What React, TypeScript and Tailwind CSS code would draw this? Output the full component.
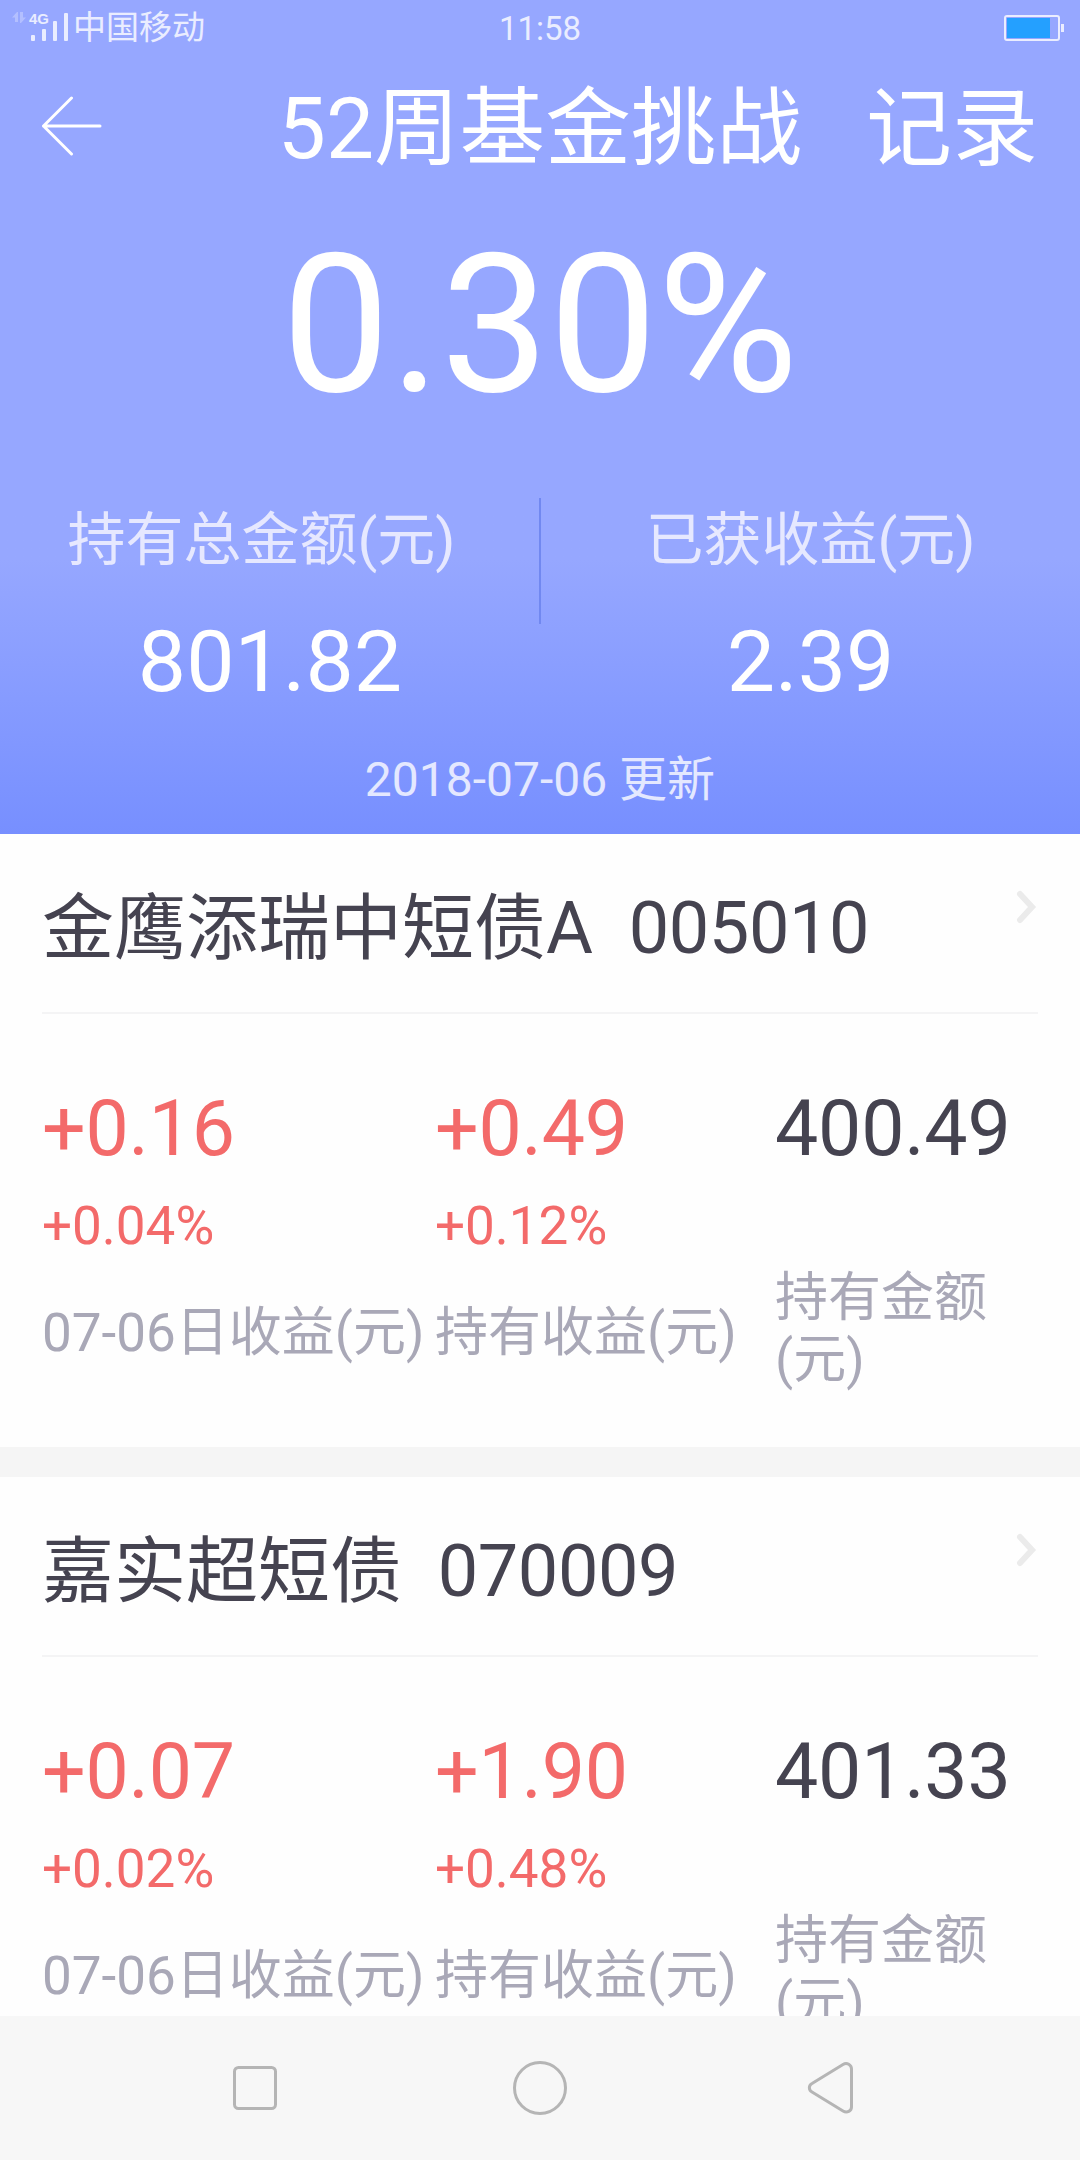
const stats = [
  { label: "持有总金额(元)", value: "801.82", labelClass: "pr-[17px]" },
  { label: "已获收益(元)", value: "2.39", labelClass: "" },
];

const funds = [
  {
    name: "金鹰添瑞中短债A",
    code: "005010",
    day: { amount: "+0.16", percent: "+0.04%" },
    total: { amount: "+0.49", percent: "+0.12%" },
    holding: "400.49",
  },
  {
    name: "嘉实超短债",
    code: "070009",
    day: { amount: "+0.07", percent: "+0.02%" },
    total: { amount: "+1.90", percent: "+0.48%" },
    holding: "401.33",
  },
];

type Fund = (typeof funds)[number];

function StatusBar() {
  return (
    <div className="grid h-14 grid-cols-3 items-center text-[#eaedff]">
      <div className="flex items-center pl-3">
        <svg className="h-[42px] w-[58px] shrink-0" viewBox="12 7 58 42" fill="currentColor">
          <path d="M12 17.5 17 12h1v10h-3v-4.5zM20 12h3v5.5h3L21 23h-1z" opacity="0.35" />
          <text x="29" y="24" fontFamily="Liberation Sans, sans-serif" fontSize="15" fontWeight="700">4G</text>
          <rect x="31" y="35" width="4" height="6" rx="1" />
          <rect x="42" y="29" width="4" height="12" rx="1" />
          <rect x="53" y="21" width="4" height="20" rx="1" />
          <rect x="64" y="13" width="4" height="28" rx="1" />
        </svg>
        <span className="ml-[3px] text-[33px] leading-[56px]">中国移动</span>
      </div>
      <div className="pt-0.5 text-center text-[33px] leading-[54px]">11:58</div>
      <div className="flex justify-end pr-4">
        <svg className="h-[26px] w-[60px]" viewBox="0 0 60 26">
          <rect x="1" y="1" width="54" height="24" rx="2" fill="none" stroke="#eaedff" strokeWidth="2" />
          <rect x="3" y="3" width="43" height="20" fill="#24a0ff" />
          <rect x="57" y="9" width="3" height="8" fill="#eaedff" />
        </svg>
      </div>
    </div>
  );
}

function Profit({ amount, percent }: { amount: string; percent: string }) {
  return (
    <div className="text-[#f36a6a]">
      <div className="text-[77px] leading-[103px] tracking-[-0.2px]">{amount}</div>
      <div className="mt-1 text-[53px] leading-[82px]">{percent}</div>
    </div>
  );
}

function FundCard({ fund }: { fund: Fund }) {
  return (
    <section className="h-[613px] shrink-0 bg-[#fefefe] px-[42px] text-[#454350]">
      <div className="flex h-[180px] justify-between border-b-2 border-[#f4f4f5]">
        <h2 className="whitespace-pre pt-[11px] text-[72px] leading-[167px]">
          {fund.name}{"  "}<span className="tracking-[-0.4px]">{fund.code}</span>
        </h2>
        <svg className="mt-[56px] mr-px h-[34px] w-[22px]" viewBox="0 0 22 34" fill="none" stroke="#ebebeb" strokeWidth="6" strokeLinecap="round">
          <path d="M5 4 17 17 5 30" />
        </svg>
      </div>

      <div className="grid grid-cols-[393px_340px_263px] pt-16">
        <Profit {...fund.day} />
        <Profit {...fund.total} />
        <div className="text-[77px] leading-[103px] tracking-[-0.2px]">{fund.holding}</div>
      </div>

      <div className="grid h-[132px] grid-cols-[393px_340px_263px] items-center text-[53px] leading-[62px] text-[#a9a8b7]">
        <div className="whitespace-nowrap">07-06日收益(元)</div>
        <div className="whitespace-nowrap">持有收益(元)</div>
        <div className="pb-2">持有金额(元)</div>
      </div>
    </section>
  );
}

export default function App() {
  return (
    <div className="flex h-[2160px] w-[1080px] flex-col overflow-hidden bg-[#f5f5f5] font-[Roboto,'Noto_Sans_CJK_SC',sans-serif]">
      <header className="h-[834px] shrink-0 bg-linear-to-b from-[#96a7ff] from-67% to-[#778fff] text-white">
        <StatusBar />

        <div className="flex h-[147px] items-center justify-between pr-[42px] pl-10 text-[86px] leading-[147px]">
          <svg className="mb-[7px] h-[60px] w-[64px]" viewBox="0 0 64 60" fill="none" stroke="currentColor" strokeWidth="3" strokeLinecap="round" strokeLinejoin="round">
            <path d="M31.5 2 3.5 30l28 28M3.5 30H60" />
          </svg>
          <div className="flex gap-16">
            <h1 className="text-[85.6px]">52周基金挑战</h1>
            <span>记录</span>
          </div>
        </div>

        <div className="pt-px text-center text-[192.5px] leading-[242px]">0.30%</div>

        <div className="flex pt-[52px]">
          {stats.map(({ label, value, labelClass }, i) => (
            <div key={label} className="flex flex-1">
              {i > 0 && <div className="-ml-px h-[126px] w-[2px] bg-[#7188f0]" />}
              <div className="flex-1 text-center">
                <div className={`text-[58px] leading-[84px] text-[#e6e8ff] ${labelClass}`}>{label}</div>
                <div className="text-[86px] leading-[159px]">{value}</div>
              </div>
            </div>
          ))}
        </div>

        <div className="text-center text-[48px] leading-[77px] text-[#e4e8ff]">2018-07-06 更新</div>
      </header>

      <main className="flex min-h-0 flex-1 flex-col gap-[30px] overflow-hidden">
        {funds.map((fund) => (
          <FundCard key={fund.code} fund={fund} />
        ))}
      </main>

      <nav className="h-36 shrink-0 bg-[#f7f7f7]">
        <svg className="h-36 w-[1080px]" viewBox="0 0 1080 144" fill="none" stroke="#b5b5b5" strokeWidth="3">
          <rect x="234.5" y="51.5" width="41" height="41" rx="4" />
          <circle cx="540" cy="72" r="25.5" />
          <path d="M812 67.5 843 48.5C847 46 851.5 49 851.5 53V91C851.5 95 847 97.5 843 95L812 76C808.5 74 808.5 69.5 812 67.5Z" />
        </svg>
      </nav>
    </div>
  );
}
